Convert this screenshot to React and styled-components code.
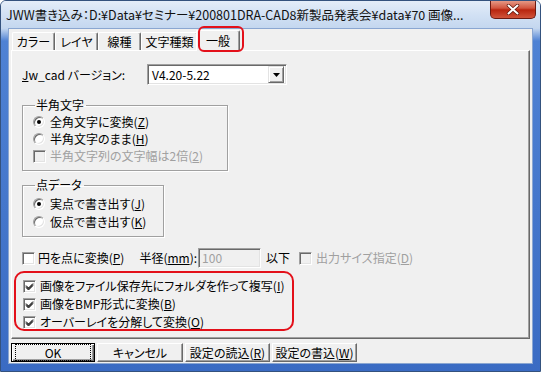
import React from 'react';
import styled, { createGlobalStyle } from 'styled-components';

const Global = createGlobalStyle`
  html, body { margin: 0; padding: 0; background: #ffffff; }
  body {
    width: 541px; height: 372px; overflow: hidden;
    font-family: "Noto Sans CJK JP", "Liberation Sans", sans-serif;
    font-size: 12px; color: #000;
    font-feature-settings: "palt";
    letter-spacing: 0px;
  }
`;

const Window = styled.div`
  box-sizing: border-box;
  width: 541px;
  height: 372px;
  display: flex;
  flex-direction: column;
  border: 1px solid #34527e;
  border-radius: 6px 6px 0 0;
  background: linear-gradient(to bottom, #dce8f7 0px, #c7d9f0 27px, #4f82d4 40px, #3a6bc3 100%);
  overflow: hidden;
`;

const TitleBar = styled.div`
  height: 27px;
  flex: none;
  display: flex;
  align-items: flex-start;
  padding-left: 5px;
  padding-right: 4px;
  background: linear-gradient(to bottom, #e4edf9 0%, #d2e1f4 50%, #c4d7ef 100%);
`;

const TitleText = styled.div`
  font-size: 12.5px;
  line-height: 16px;
  padding-top: 6px;
  white-space: nowrap;
  letter-spacing: 0px;
  color: #111;
  flex: 1;
  min-width: 0;
`;

const CloseBtn = styled.div`
  width: 46px;
  height: 19px;
  margin-top: -1px;
  box-sizing: border-box;
  border: 1px solid #6b1a12;
  border-top: none;
  border-radius: 0 0 5px 5px;
  background: linear-gradient(to bottom, #e8a28f 0%, #d2553f 45%, #b8250f 55%, #d0533a 100%);
  display: flex;
  align-items: center;
  justify-content: center;
  flex: none;
`;

const Client = styled.div`
  flex: 1;
  margin: 0 7px 9px 7px;
  background: #f0f0f0;
  display: flex;
  flex-direction: column;
  padding: 1px 2px 1px 2px;
  border: 1px solid #8aa6d1;
`;

const TabStrip = styled.div`
  height: 20px;
  display: flex;
  align-items: flex-end;
  padding-left: 1px;
  flex: none;
  position: relative;
  z-index: 2;
`;

const Tab = styled.div`
  box-sizing: border-box;
  position: relative;
  width: ${p => p.$w}px;
  height: ${p => (p.$active ? 21 : 18)}px;
  margin: 0 ${p => (p.$active ? -2 : 0)}px ${p => (p.$active ? -1 : 0)}px;
  z-index: ${p => (p.$active ? 2 : 1)};
  border-top: 1px solid #ffffff;
  border-left: 1px solid #ffffff;
  border-right: 1px solid #696969;
  border-radius: 2px 2px 0 0;
  box-shadow: inset -1px 0 0 #a0a0a0;
  background: #f0f0f0;
  display: flex;
  align-items: center;
  justify-content: center;
  font-size: 12px;
  line-height: 14px;
  padding-top: ${p => (p.$active ? 0 : 1)}px;
`;

const RedMark = styled.span`
  position: absolute;
  left: ${p => p.$l}px;
  top: ${p => p.$t}px;
  width: ${p => p.$w}px;
  height: ${p => p.$h}px;
  border: 2px solid #e3101a;
  border-radius: ${p => p.$r}px;
  pointer-events: none;
  box-sizing: border-box;
`;

const Panel = styled.div`
  box-sizing: border-box;
  height: 289px;
  flex: none;
  border: 1px solid;
  border-color: #ffffff #696969 #696969 #ffffff;
  box-shadow: inset -1px -1px 0 #a0a0a0;
  padding: 13px 10px 0 10px;
  display: flex;
  flex-direction: column;
  align-items: flex-start;
`;

const Row = styled.div`
  display: flex;
  align-items: center;
  height: ${p => p.$h || 17}px;
  margin-top: ${p => p.$mt || 0}px;
  color: ${p => (p.$disabled ? '#a0a0a0' : '#000')};
  white-space: nowrap;
  line-height: 14px;
`;

const VersionLabel = styled.div`
  width: 125px;
  white-space: nowrap;
`;

const Combo = styled.div`
  box-sizing: border-box;
  width: 140px;
  height: 21px;
  background: #fff;
  border: 1px solid;
  border-color: #a0a0a0 #ffffff #ffffff #a0a0a0;
  box-shadow: inset 1px 1px 0 #696969, inset -1px -1px 0 #e3e3e3;
  display: flex;
  align-items: center;
  padding: 0 2px 0 4px;
`;

const ComboText = styled.div`
  flex: 1;
  font-size: 12px;
  padding-top: 1px;
`;

const ArrowBtn = styled.div`
  box-sizing: border-box;
  width: 16px;
  height: 17px;
  background: #f0f0f0;
  border: 1px solid;
  border-color: #e3e3e3 #696969 #696969 #e3e3e3;
  box-shadow: inset 1px 1px 0 #fff, inset -1px -1px 0 #a0a0a0;
  display: flex;
  align-items: center;
  justify-content: center;
`;

const Group = styled.fieldset`
  box-sizing: border-box;
  width: ${p => p.$w}px;
  margin: ${p => p.$mt}px 0 0 0;
  padding: ${p => p.$pt || 0}px 0 ${p => p.$pb}px 10px;
  border: 1px solid #a0a0a0;
  box-shadow: inset 1px 1px 0 #fff, 1px 1px 0 #fff;
  min-width: 0;
`;

const Legend = styled.legend`
  padding: 0 2px 0 1px;
  margin-left: 2px;
  font-size: 12px;
  line-height: 14px;
`;

const RadioCircle = styled.span`
  box-sizing: border-box;
  width: 12px;
  height: 12px;
  border-radius: 50%;
  border: 1px solid;
  border-color: #a0a0a0 #fff #fff #a0a0a0;
  box-shadow: inset 1px 1px 0 #696969, inset -1px -1px 0 #e3e3e3;
  background: #fff;
  margin-right: 5px;
  display: inline-flex;
  align-items: center;
  justify-content: center;
  flex: none;
`;

const Dot = styled.span`
  width: 4px;
  height: 4px;
  border-radius: 50%;
  background: #000;
`;

const CheckBox = styled.span`
  box-sizing: border-box;
  width: 13px;
  height: 13px;
  border: 1px solid;
  border-color: #a0a0a0 #fff #fff #a0a0a0;
  box-shadow: inset 1px 1px 0 #696969, inset -1px -1px 0 #e3e3e3;
  background: ${p => (p.$disabled ? '#f0f0f0' : '#fff')};
  margin-right: ${p => p.$mr ?? 4}px;
  display: inline-flex;
  align-items: center;
  justify-content: center;
  flex: none;
`;

const InputBox = styled.div`
  box-sizing: border-box;
  width: 63px;
  height: 20px;
  border: 1px solid;
  border-color: #a0a0a0 #fff #fff #a0a0a0;
  box-shadow: inset 1px 1px 0 #696969, inset -1px -1px 0 #e3e3e3;
  background: #f0f0f0;
  color: #a0a0a0;
  padding: 2px 3px 0;
  margin: 0 5px 0 1px;
`;

const Gray = styled.span`
  color: #a0a0a0;
  display: inline-flex;
  align-items: center;
`;

const Spacer = styled.span`
  width: ${p => p.$w}px;
  flex: none;
`;

const RedBox = styled.div`
  box-sizing: border-box;
  width: 280px;
  height: 60px;
  margin: 3px 0 0 -8px;
  border: 2px solid #e3101a;
  border-radius: 10px;
  padding: 4px 0 0 7px;
`;

const ButtonRow = styled.div`
  display: flex;
  gap: 2px;
  margin-top: 4px;
  height: 19px;
`;

const Button = styled.div`
  box-sizing: border-box;
  width: ${p => p.$w}px;
  height: 19px;
  background: #f0f0f0;
  border: 1px solid;
  border-color: ${p => (p.$default ? '#000' : '#fff #696969 #696969 #fff')};
  box-shadow: ${p => (p.$default
    ? 'inset 1px 1px 0 #fff, inset -1px -1px 0 #696969, inset -2px -2px 0 #a0a0a0'
    : 'inset -1px -1px 0 #a0a0a0')};
  display: flex;
  align-items: center;
  justify-content: center;
  font-size: 12px;
  line-height: 14px;
`;

const Focus = styled.span`
  box-sizing: border-box;
  width: 100%;
  height: 100%;
  margin: 3px;
  border: 1px dotted #000;
  display: flex;
  align-items: center;
  justify-content: center;
`;

const Check = () => (
  <svg width="9" height="9" viewBox="0 0 9 9">
    <path d="M1 3.5 L3.5 6 L8 1.5 M1 4.5 L3.5 7 L8 2.5 M1 5.5 L3.5 8 L8 3.5" stroke="#000" strokeWidth="1" fill="none" />
  </svg>
);

const Radio = ({ on }) => (
  <RadioCircle>{on && <Dot />}</RadioCircle>
);

export default function App() {
  return (
    <>
      <Global />
      <Window>
        <TitleBar>
          <TitleText>JWW書き込み：D:¥Data¥セミナー¥200801DRA-CAD8新製品発表会¥data¥70 画像...</TitleText>
          <CloseBtn>
            <svg width="14" height="11" viewBox="0 0 14 11">
              <path d="M2.5 1.5 L11.5 9.5 M11.5 1.5 L2.5 9.5" stroke="#5a1208" strokeWidth="3.4" strokeLinecap="round" />
              <path d="M2.5 1.5 L11.5 9.5 M11.5 1.5 L2.5 9.5" stroke="#fff" strokeWidth="2" strokeLinecap="round" />
            </svg>
          </CloseBtn>
        </TitleBar>
        <Client>
          <TabStrip>
            <Tab $w={43}>カラー</Tab>
            <Tab $w={43}>レイヤ</Tab>
            <Tab $w={43}>線種</Tab>
            <Tab $w={57}>文字種類</Tab>
            <Tab $w={44} $active>
              一般
              <RedMark $l={1} $t={-5} $w={46} $h={26} $r={6} />
            </Tab>
          </TabStrip>
          <Panel>
            <Row $h={21}>
              <VersionLabel><u>J</u>w_cad バージョン:</VersionLabel>
              <Combo>
                <ComboText>V4.20-5.22</ComboText>
                <ArrowBtn>
                  <svg width="7" height="4" viewBox="0 0 7 4"><path d="M0 0 H7 L3.5 4 Z" fill="#000" /></svg>
                </ArrowBtn>
              </Combo>
            </Row>
            <Group $w={206} $mt={13} $pb={5} $pt={1}>
              <Legend>半角文字</Legend>
              <Row><Radio on />全角文字に変換(<u>Z</u>)</Row>
              <Row><Radio />半角文字のまま(<u>H</u>)</Row>
              <Row $h={18} $disabled><CheckBox $disabled />半角文字列の文字幅は2倍(<u>2</u>)</Row>
            </Group>
            <Group $w={142} $mt={7} $pb={5} $pt={3}>
              <Legend>点データ</Legend>
              <Row $h={18}><Radio on />実点で書き出す(<u>J</u>)</Row>
              <Row $h={18}><Radio />仮点で書き出す(<u>K</u>)</Row>
            </Group>
            <Row $h={20} $mt={11}>
              <CheckBox $mr={3} />円を点に変換(<u>P</u>)
              <Spacer $w={15} />
              半径(<u>mm</u>):
              <InputBox>100</InputBox>
              以下
              <Spacer $w={9} />
              <Gray><CheckBox $disabled $mr={4} />出力サイズ指定(<u>D</u>)</Gray>
            </Row>
            <RedBox>
              <Row $h={18}><CheckBox $mr={4}><Check /></CheckBox>画像をファイル保存先にフォルダを作って複写(<u>I</u>)</Row>
              <Row $h={18}><CheckBox $mr={4}><Check /></CheckBox>画像をBMP形式に変換(<u>B</u>)</Row>
              <Row $h={18}><CheckBox $mr={4}><Check /></CheckBox>オーバーレイを分解して変換(<u>O</u>)</Row>
            </RedBox>
          </Panel>
          <ButtonRow>
            <Button $w={84} $default><Focus>OK</Focus></Button>
            <Button $w={86}>キャンセル</Button>
            <Button $w={85}>設定の読込(<u>R</u>)</Button>
            <Button $w={85}>設定の書込(<u>W</u>)</Button>
          </ButtonRow>
        </Client>
      </Window>
    </>
  );
}
